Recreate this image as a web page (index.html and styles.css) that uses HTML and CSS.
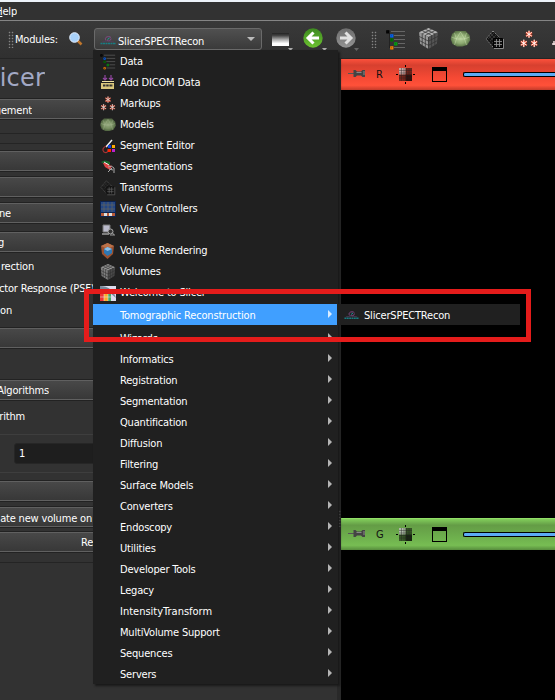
FILE: index.html
```html
<!DOCTYPE html>
<html lang="en">
<head>
<meta charset="utf-8">
<title>Slicer</title>
<link rel="stylesheet" href="styles.css">
</head>
<body>
<svg class="defs" aria-hidden="true">
  <defs>
    <radialGradient id="ball"><stop offset="0" stop-color="#b5ce98"/><stop offset=".6" stop-color="#8eab72"/><stop offset="1" stop-color="#5d7649"/></radialGradient>
    <linearGradient id="go" x2="0" y2="1"><stop stop-color="#3d8a20"/><stop offset="1" stop-color="#6cc230"/></linearGradient>
    <linearGradient id="off" x2="0" y2="1"><stop stop-color="#777"/><stop offset="1" stop-color="#a5a5a5"/></linearGradient>
    <linearGradient id="fade" x2="0" y2="1"><stop stop-color="#222"/><stop offset=".2" stop-color="#444"/><stop offset=".5" stop-color="#aaa"/><stop offset=".8" stop-color="#fff"/></linearGradient>
    <symbol id="data" viewBox="0 0 20 20"><path d="M5 1.500h14M8 5.500h11M8 9.500h11M12 13.500h7M8 17.500h11" stroke="#666"/><path d="M3.500 3v15M3 10h2" stroke="#222"/><g fill="#111" stroke-width="1.200"><path d="M.8.8h2v2h-2z" stroke="#000"/><path d="M4.800 4.800h2v2h-2z" stroke="#06f"/><path d="M4.800 8.800h2v2h-2z" stroke="#070"/><path d="M8.800 12.800h2v2h-2z" stroke="#0a1"/><path d="M4.800 16.800h2v2h-2z" stroke="#f80"/></g></symbol>
    <symbol id="cube" viewBox="0 0 20 20"><path d="M10 0l9 4-9 4.500L1 4z" fill="#b5b5b5"/><path d="M1 4l9 4.500V20l-8-5z" fill="#999"/><path d="M19 4l-9 4.500V20l8-5z" fill="#555"/><path d="M4 5.500v11M7 7v11M10 8.500V20M13 7v11M16 5.500v11M1 8l9 4.500L19 8M1.500 12l8.500 4.500L18.500 12M4 2.500l9 4.500M7 1.200l9 4.300M16 2.500L7 7M13 1.200L4 5.500" fill="none" stroke="#333" stroke-width=".7"/></symbol>
    <symbol id="model" viewBox="0 0 20 20"><path d="M5 2h10l4 4 .8 5-3 5-5 1.500H6.500L2 15 .2 10 1.500 5z" fill="url(#ball)"/><path d="M1 8l5 2 4-7 4 7 5-2M6 10l-2 6M14 10l2 6M6 10h8M4 4l2 6M16 4l-2 6" stroke="#d8ebbd" stroke-opacity=".4" fill="none"/></symbol>
    <symbol id="grid" viewBox="0 0 20 20"><path d="M8 1l8 8-8 8-7-8z" fill="#151515" stroke="#888" stroke-dasharray="1.500 1"/><path d="M3 9l6-6M5 11l6-6M7 13l6-6M4 6l6 6M6 4l6 6" stroke="#555" stroke-width=".5"/><path d="M8.500 8.500h9v9h-9z" fill="#111" stroke="#000"/><path d="M9 11.500h8M9 14.500h8M11.500 9v8M14.500 9v8" stroke="#999" stroke-width=".8"/><path d="M18.500 9v9.500H9" stroke="#888" fill="none"/></symbol>
    <symbol id="marks" viewBox="0 0 20 20"><g id="stars" fill="none"><path d="M10 1v7M6.800 2.500l6.400 4M13.200 2.500l-6.400 4" stroke="#e42" stroke-width="2"/><path d="M10 .5v8M7 2.500l6 4M13 2.500l-6 4" stroke="#fff" stroke-width="1"/></g><use href="#stars" x="-5.500" y="9.500"/><use href="#stars" x="5.500" y="9.500"/></symbol>
    <symbol id="logo" viewBox="0 0 17 10"><path d="M6 5.500C3.500 2 9 .5 11 2.500M7 5.500c2 1 4 0 4-2" stroke="#844a88" fill="none"/><path d="M7.500 4.500l2-1.500" stroke="#18a0a0"/><path d="M2 7q6-2 12 0" stroke="#543b5c" fill="none" stroke-width=".8"/><path d="M.5 8.500h15.500" stroke="#187c82" stroke-width="1.500" stroke-dasharray="2 .5"/></symbol>
    <symbol id="target" viewBox="0 0 19 19"><path d="M9.500 0v2M9.500 17v2M0 9.500h2M17 9.500h2" stroke="#000"/><path d="M3 3h13v13H3z" fill="#000" fill-opacity=".5"/><path d="M3 3h6.500v6.500H3z" fill="#fff" fill-opacity=".6"/><path d="M9.500 9.500H16V16H9.500z" fill-opacity=".6"/><path d="M3 5.500h13M3 8h13M3 10.500h13M3 13h13M5.500 3v13M8 3v13M10.500 3v13M13 3v13" stroke="#222" stroke-opacity=".5" stroke-width=".8"/></symbol>
    <symbol id="pin" viewBox="0 0 18 11"><path d="M0 5.500h7" stroke="#555"/><path d="M5.500 2h2l1.500 1.500h4L14.500 2H17v7h-2.500L13 7.500H9L7.500 9h-2z" fill="#444"/><path d="M8.500 4.500h5M16 3v4" stroke="#888"/></symbol>
    <symbol id="arrow" viewBox="0 0 20 20"><circle cx="10" cy="10" r="9.700"/><path d="M16 10H6M10.500 4.500L5 10l5.500 5.500" fill="none" stroke="#fff" stroke-width="3"/></symbol>
  </defs>
</svg>
<div class="app">
  <div class="menubar"><span class="cut help"><span><u>H</u>elp</span></span></div>
  <div class="toolbar">
    <i class="grip g1"></i><span class="label">Modules:</span>
    <svg class="lens" viewBox="0 0 14 14"><path d="M8.500 8.500l4 4" stroke="#bf762d" stroke-width="2.500"/><circle cx="5.500" cy="5.500" r="4.800" fill="#a8d1fa" stroke="#e4efff"/></svg>
    <div class="combo"><svg><use href="#logo"/></svg><span>SlicerSPECTRecon</span><i></i></div>
    <svg class="hist" viewBox="0 0 21 19"><path d="M0 0h17v13H0z" fill="url(#fade)"/><path d="M16 15h5l-2.500 3z" fill="#aaa"/></svg>
    <svg class="nav" viewBox="0 0 25 24"><use href="#arrow" width="20" height="20" fill="url(#go)"/><path d="M19 20h5l-2.500 3z" fill="#aaa"/></svg>
    <svg class="nav fwd" viewBox="0 0 25 24"><g transform="translate(20 0) scale(-1 1)" opacity=".85"><use href="#arrow" width="20" height="20" fill="url(#off)"/></g><path d="M18 20h5l-2.500 3z" fill="#666"/></svg>
    <i class="grip g2"></i>
    <svg class="t1"><use href="#data"/></svg>
    <svg class="t2"><use href="#cube"/></svg>
    <svg class="t3"><use href="#model"/></svg>
    <svg class="t4"><use href="#grid"/></svg>
    <svg class="t5"><use href="#marks"/></svg>
    <svg class="t6" viewBox="0 0 3 6"><path d="M0 4h3M2 1v4" stroke="#edd" stroke-width="1.500"/></svg>
  </div>
  <div class="work">
    <div class="panel">
      <div class="brand"><span>icer</span></div>
      <div class="btn b1"><span class="cut w32">gement</span></div>
      <hr class="h1"><hr class="h2">
      <div class="btn b2"></div>
      <div class="btn b3"></div>
      <div class="btn b4"><span class="cut w10">ne</span></div>
      <div class="btn b5"><span class="cut w4">g</span></div>
      <div class="line l1"><span class="cut w33">rection</span></div>
      <div class="line"><span class="psf">ctor Response (PSF)</span></div>
      <div class="line"><span class="cut w12">on</span></div>
      <div class="btn b6"></div>
      <div class="btn b7"><span class="cut w49">Algorithms</span></div>
      <div class="line l2"><span class="cut w25">rithm</span></div>
      <hr class="h3">
      <div class="input">1</div>
      <hr class="h4">
      <div class="btn b8"></div>
      <div class="btn b9"><span class="cut w91">ate new volume on</span></div>
      <div class="btn b10"><span class="re">Re</span></div>
      <hr class="h5">
    </div>
    <div class="views">
      <div class="bar red"><svg class="pin"><use href="#pin"/></svg><b>R</b><svg class="target"><use href="#target"/></svg><i class="win"></i><i class="slider"></i></div>
      <div class="black"></div>
      <div class="bar green"><svg class="pin"><use href="#pin"/></svg><b>G</b><svg class="target"><use href="#target"/></svg><i class="win"></i><i class="slider"></i></div>
    </div>
  </div>
  <i class="grip split"></i>
  <div class="menu">
    <div class="item"><svg class="dim"><use href="#data"/></svg>Data</div>
    <div class="item"><svg viewBox="0 0 16 16"><path d="M5 0v5M3 3l2 2 2-2M11 0v5M9 3l2 2 2-2" stroke="#9147a0" fill="none" stroke-width="1.200"/><path d="M2 6h12v1H2z" fill="#f0e2a0"/><path d="M1 8h13v6H1z" fill="#dac77c"/><path d="M3 10.500h10" stroke="#333" stroke-width="2" stroke-dasharray="2.500 .7"/></svg>Add DICOM Data</div>
    <div class="item"><svg class="dim"><use href="#marks"/></svg>Markups</div>
    <div class="item"><svg class="dim"><use href="#model"/></svg>Models</div>
    <div class="item"><svg viewBox="0 0 16 16"><path d="M12 2L6 9" stroke="#eee" stroke-width="1.500"/><path d="M6 8q-5 3-2 6 4 2 4-3" fill="none" stroke="#a33" stroke-width="1.200"/><path d="M8 7h3v3H8z" fill="#14d"/><path d="M12 7h3v3h-3z" fill="#fa0"/><path d="M8 11h3v3H8z" fill="#f20"/><path d="M12 11h3v3h-3z" fill="#b2c"/></svg>Segment Editor</div>
    <div class="item"><svg viewBox="0 0 16 16"><path d="M1 3q4-3 9 0v4l-5-1z" fill="#17652b"/><path d="M3 4q4-1 6 2l3 1-2 4-5-3z" fill="#d44"/><path d="M8 8q4-2 6 1v5M9 10l4 1M8 13l4-4" stroke="#aaa" fill="none"/><path d="M4 3l5 3" stroke="#eee"/></svg>Segmentations</div>
    <div class="item"><svg class="dark"><use href="#grid"/></svg>Transforms</div>
    <div class="item"><svg viewBox="0 0 16 16"><path d="M0 0h16v16H0z" fill="#0c2350"/><path d="M1 1h14v10H1z" fill="#244785"/><path d="M4 1v10M8 1v10M12 1v10M1 4h14M1 8h14" stroke="#66655c" stroke-width=".7"/><path d="M1 13.500h14" stroke="#b85a38" stroke-width="3"/><path d="M4 12h3v3H4zM9 12h3v3H9z" fill="#ddd"/></svg>View Controllers</div>
    <div class="item"><svg viewBox="0 0 16 16"><path d="M3 3h7v7H3z" fill="#bbc" stroke="#777"/><path d="M2 12h7" stroke="#ddd"/><circle cx="10.500" cy="9.500" r="2.500" fill="#333" stroke="#aaa"/><path d="M10 13h5M12 10l2 3" stroke="#999"/></svg>Views</div>
    <div class="item"><svg viewBox="0 0 16 16"><path d="M7.500 0L14 3l-1 8-5.500 5L2 11 1 3z" fill="#9b5130"/><path d="M7.500 0L14 3 7.500 6 1 3z" fill="#bb724a"/><path d="M7.500 4L12 6v4l-4.500 3L4 10V6z" fill="#2f78b4"/><path d="M7.500 4L12 6 7.500 8 4 6z" fill="#8dc0e8"/></svg>Volume Rendering</div>
    <div class="item"><svg class="dim"><use href="#cube"/></svg>Volumes</div>
    <div class="item"><svg viewBox="0 0 16 16"><path d="M0 1h16v15H0z" fill="#dde"/><path d="M0 1q12 0 16 12L9 7H0z" fill="#789"/><path d="M0 9h4v7H0z" fill="#e33"/><path d="M4 9h4v7H4z" fill="#fa2"/><path d="M8 9h3v7H8z" fill="#4a6"/><path d="M4 8v8M8 8v8M0 12h12" stroke="#ddd" stroke-width=".6"/></svg>Welcome to Slicer</div>
    <div class="item sub active">Tomographic Reconstruction<i></i></div>
    <div class="item sub">Wizards<i></i></div>
    <div class="item sub">Informatics<i></i></div>
    <div class="item sub">Registration<i></i></div>
    <div class="item sub">Segmentation<i></i></div>
    <div class="item sub">Quantification<i></i></div>
    <div class="item sub">Diffusion<i></i></div>
    <div class="item sub">Filtering<i></i></div>
    <div class="item sub">Surface Models<i></i></div>
    <div class="item sub">Converters<i></i></div>
    <div class="item sub">Endoscopy<i></i></div>
    <div class="item sub">Utilities<i></i></div>
    <div class="item sub">Developer Tools<i></i></div>
    <div class="item sub">Legacy<i></i></div>
    <div class="item sub wide">IntensityTransform<i></i></div>
    <div class="item sub">MultiVolume Support<i></i></div>
    <div class="item sub">Sequences<i></i></div>
    <div class="item sub">Servers<i></i></div>
  </div>
  <div class="submenu"><svg><use href="#logo"/></svg>SlicerSPECTRecon</div>
  <div class="callout"></div>
</div>
</body>
</html>
```
FILE: styles.css
```css
* { box-sizing: border-box; }
body { margin: 0; background: #323232; color: #fff; font: 11px/14px "DejaVu Sans Condensed", "DejaVu Sans", sans-serif; font-stretch: condensed; letter-spacing: -0.18px; }
svg { display: block; flex: none; }
.defs { position: absolute; width: 0; height: 0; }
.app { position: relative; width: 555px; height: 700px; overflow: hidden; white-space: nowrap; display: flex; flex-direction: column; }
.cut { display: flex; justify-content: flex-end; overflow: hidden; }
.menubar { height: 21px; border-top: 2px solid #edf3fa; border-bottom: 1px solid #858585; flex: none; }
.help { width: 17px; padding-top: 3px; }
.toolbar { height: 38px; flex: none; background: linear-gradient(#393939, #303030); border-bottom: 1px solid #252525; display: flex; align-items: flex-start; }
.grip { display: block; flex: none; background: radial-gradient(circle, #858585 35%, transparent 50%) 0 0 / 3px 3px; }
.g1 { width: 6px; height: 17px; margin: 10px 0 0 8px; }
.label { width: 43px; margin: 12px 0 0 1px; letter-spacing: -0.2px; }
.lens { width: 14px; height: 14px; margin: 11px 0 0 11px; }
.combo { width: 168px; height: 22px; margin: 7px 0 0 11px; border: 1px solid #6a6a6a; border-radius: 3px; background: linear-gradient(#505050, #3a3a3a); display: flex; align-items: center; padding: 5px 6px 0 5px; }
.combo svg { width: 17px; height: 10px; margin: -4px 1px 0 0; }
.combo i { border: 4px solid transparent; border-top-color: #bbb; border-bottom: 0; margin: -6px 0 0 auto; }
.hist { width: 21px; height: 19px; margin: 12px 0 0 10px; }
.nav { width: 25px; height: 24px; margin: 7px 0 0 10px; }
.fwd { margin-left: 8px; }
.g2 { width: 6px; height: 17px; margin: 10px 0 0 10px; }
.t1 { width: 20px; height: 20px; margin: 9px 0 0 9px; }
.t2 { width: 21px; height: 21px; margin: 7px 0 0 12px; }
.t3 { width: 21px; height: 20px; margin: 8px 0 0 11px; }
.t4 { width: 20px; height: 20px; margin: 9px 0 0 14px; }
.t5 { width: 20px; height: 19px; margin: 9px 0 0 14px; }
.t6 { width: 3px; height: 6px; margin: 19px 0 0 13px; }
.work { flex: 1; display: flex; }
.panel { width: 341px; flex: none; display: flex; flex-direction: column; padding-top: 6px; border-right: 4px solid #292929; }
.brand { width: 45px; height: 30px; display: flex; justify-content: flex-end; overflow: hidden; color: #a3a9c5; font: 24px/26px "DejaVu Sans", sans-serif; font-stretch: normal; letter-spacing: 0.2px; }
.btn { height: 20px; flex: none; border-top: 1px solid #606060; border-bottom: 1px solid #606060; background: linear-gradient(#484848, #383838); padding-top: 3px; box-shadow: 0 -1px #222, 0 1px #222; }
.b1 { margin-top: 4px; padding-top: 4px; }
.b2 { margin-top: 7px; }
.b3 { margin-top: 6px; }
.b4 { margin-top: 6px; }
.b5 { margin-top: 9px; }
.b6 { margin-top: 6px; }
.b7 { margin-top: 32px; }
.b8 { margin-top: 8px; }
.b9 { margin-top: 6px; padding-top: 4px; }
.b10 { margin-top: 5px; }
.w4 { width: 4px; } .w10 { width: 11px; } .w12 { width: 12px; } .w25 { width: 25px; } .w32 { width: 32px; } .w33 { width: 34px; } .w49 { width: 49px; } .w91 { width: 92px; }
.psf { margin-left: -1px; }
.re { margin-left: 81px; }
hr { margin: 0; border: 0; height: 1px; background: #242424; flex: none; }
.h1 { margin-top: 14px; }
.h2 { margin-top: 9px; }
.h3 { margin-top: 4px; background: #3e3e3e; }
.h4 { margin-top: 8px; background: #3e3e3e; }
.h5 { margin-top: 10px; }
.line { height: 22px; flex: none; padding-top: 4px; }
.l1 { margin-top: 4px; }
.l2 { margin-top: 6px; height: 24px; }
.input { height: 21px; flex: none; margin: 8px 0 0 14px; background: #1e1e1e; border: 1px solid #262626; border-radius: 3px; padding: 3px 4px; }
.views { flex: 1; background: #000; display: flex; flex-direction: column; }
.bar { height: 31px; flex: none; display: flex; align-items: flex-start; color: #111; }
.red { background: linear-gradient(#fc513c, #d7402f 20%, #f54934 60%, #ff5139 85%, #c33b2a); }
.green { height: 32px; border-top: 1px solid #91df67; background: linear-gradient(#82ce5b, #649c46 20%, #6eb04d 60%, #77bd53 85%, #578c3d); }
.black { height: 428px; flex: none; }
.pin { width: 18px; height: 11px; margin: 9px 0 0 7px; }
.bar b { font-weight: 400; width: 20px; margin: 9px 0 0 10px; }
.target { width: 19px; height: 19px; margin: 6px 0 0; }
.win { width: 15px; height: 15px; margin: 8px 0 0 17px; border: 1px solid #000; border-top-width: 4px; }
.slider { flex: 1; height: 5px; margin: 13px 0 0 16px; border: 1px solid #000; border-right: 0; background: #5caaf5; border-radius: 2px 0 0 2px; }
.split { position: absolute; left: 338px; top: 510px; width: 3px; height: 17px; }
.menu { position: absolute; left: 93px; top: 50px; width: 245px; height: 634px; background: #202020; padding-top: 1px; box-shadow: 2px 2px 2px #191919; }
.item { display: flex; align-items: center; height: 21px; padding-left: 7px; }
.item svg { width: 16px; height: 16px; margin-right: 4px; }
.dim { opacity: .8; }
.dark { opacity: .55; }
.sub { padding: 2px 5px 0 27px; width: 244px; justify-content: space-between; }
.sub i { border: 4px solid transparent; border-left-color: #b5b5b5; border-right: 0; margin-top: -3px; }
.wide { letter-spacing: 0; }
.active { background: #409fff; margin: 1px 0 2px; }
.active i { border-left-color: #d9ecff; }
.submenu { position: absolute; left: 337px; top: 304px; width: 183px; height: 21px; background: #202020; display: flex; align-items: center; padding: 2px 0 0 7px; }
.submenu svg { width: 16px; height: 10px; margin: -2px 4px 0 0; }
.callout { position: absolute; left: 84px; top: 289px; width: 447px; height: 53px; border: 5px solid #e51c1b; }
```
